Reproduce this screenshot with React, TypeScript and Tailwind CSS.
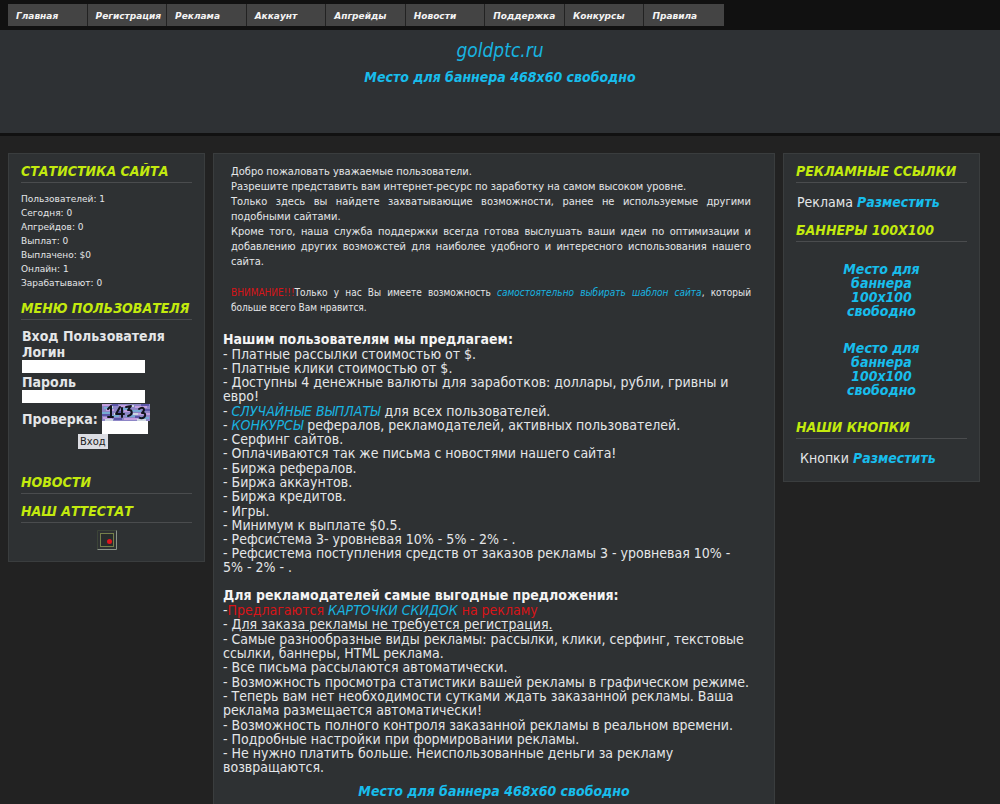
import type { ReactNode } from 'react'

const menu = ['Главная', 'Регистрация', 'Реклама', 'Аккаунт', 'Апгрейды', 'Новости', 'Поддержка', 'Конкурсы', 'Правила']

const stats = [
  ['Пользователей', '1'],
  ['Сегодня', '0'],
  ['Апгрейдов', '0'],
  ['Выплат', '0'],
  ['Выплачено', '$0'],
  ['Онлайн', '1'],
  ['Зарабатывают', '0'],
]

// Lists are kept in small groups, separated by a hairline gap
const userOffers: ReactNode[][] = [
  [
    'Платные рассылки стоимостью от $.',
    'Платные клики стоимостью от $.',
    'Доступны 4 денежные валюты для заработков: доллары, рубли, гривны и евро!',
  ],
  [
    <><Accent>СЛУЧАЙНЫЕ ВЫПЛАТЫ</Accent> для всех пользователей.</>,
    <><Accent>КОНКУРСЫ</Accent> рефералов, рекламодателей, активных пользователей.</>,
    'Серфинг сайтов.',
    'Оплачиваются так же письма с новостями нашего сайта!',
  ],
  ['Биржа рефералов.', 'Биржа аккаунтов.', 'Биржа кредитов.'],
  [
    'Игры.',
    'Минимум к выплате $0.5.',
    'Рефсистема 3- уровневая 10% - 5% - 2% - .',
    'Рефсистема поступления средств от заказов рекламы 3 - уровневая 10% - 5% - 2% - .',
  ],
]

const adOffers: ReactNode[][] = [
  [
    'Самые разнообразные виды рекламы: рассылки, клики, серфинг, текстовые ссылки, баннеры, HTML реклама.',
    'Все письма рассылаются автоматически.',
  ],
  [
    'Возможность просмотра статистики вашей рекламы в графическом режиме.',
    'Теперь вам нет необходимости сутками ждать заказанной рекламы. Ваша реклама размещается автоматически!',
  ],
  [
    'Возможность полного контроля заказанной рекламы в реальном времени.',
    'Подробные настройки при формировании рекламы.',
    'Не нужно платить больше. Неиспользованные деньги за рекламу возвращаются.',
  ],
]

function Accent({ children }: { children: ReactNode }) {
  return <a href="#" className="italic text-[#18b4e0]">{children}</a>
}

function BoldLink({ children }: { children: ReactNode }) {
  return <a href="#" className="font-bold italic text-[#18bdec]">{children}</a>
}

function Title({ children }: { children: ReactNode }) {
  return (
    <h2 className="border-b border-[#4a4c4e] text-[14px] leading-[21px] font-bold italic uppercase whitespace-nowrap text-[#c3ea0e]">
      {children}
    </h2>
  )
}

function OfferList({ items }: { items: ReactNode[] }) {
  return (
    <ul>
      {items.map((item, i) => (
        <li key={i}>- {item}</li>
      ))}
    </ul>
  )
}

function Captcha() {
  return (
    <svg width="48" height="17" viewBox="0 0 48 17" role="img" aria-label="Код проверки">
      <rect width="48" height="17" fill="#8d85c6" />
      <g strokeWidth="1.5" fill="none">
        <path d="M0 1h9M17 2h12M33 3h12M4 6h8M22 7h6M36 10h12M1 14h9M22 15h14" stroke="#d3a7e6" />
        <path d="M2 4h9M19 5h7M30 7h9M0 9h10M24 12h9M9 12h8M39 14h8" stroke="#6fb7d8" />
        <path d="M10 1h6M39 1h8M0 11h8M15 8h6M33 13h5M12 15h8M41 6h7" stroke="#4c479f" />
        <path d="M7 3h4M27 2h5M12 10h5M31 10h5M3 16h8M35 16h9" stroke="#dff0ea" />
      </g>
      <g stroke="#11131c" strokeWidth="2" fill="none" strokeLinecap="round" strokeLinejoin="round">
        <path d="M6 5l3-3v11M6 13h5" />
        <path d="M18 3l-4 7h8M20 4v9" />
        <path d="M24 3l5-1-3 4c5-1 5 5 0 6" />
        <path d="M37 5c4-3 7 0 3 4 5-1 4 6-2 5" />
      </g>
    </svg>
  )
}

function LoginForm() {
  return (
    <form className="mt-2 flex flex-col items-start pl-px text-[14px] leading-4 font-bold" onSubmit={(e) => e.preventDefault()}>
      <h3>Вход Пользователя</h3>
      <label htmlFor="login">Логин</label>
      <input id="login" type="text" className="h-[13px] w-[123px] bg-white px-1 text-[11px] text-black" />
      <label htmlFor="password" className="mt-px">Пароль</label>
      <input id="password" type="password" className="h-[13px] w-[123px] bg-white px-1 text-[11px] text-black" />
      <div className="mt-px flex items-center gap-1">
        <label htmlFor="code">Проверка:</label>
        <div className="flex flex-col">
          <Captcha />
          <input id="code" type="text" className="h-[13px] w-[46px] bg-white px-1 text-[11px] text-black" />
        </div>
      </div>
      <button type="submit" className="ml-14 h-[15px] bg-[#dcdde3] px-0.5 text-[11px] leading-[15px] font-normal text-[#222]">
        Вход
      </button>
    </form>
  )
}

export default function App() {
  return (
    <div className="min-h-screen bg-[#222] font-['DejaVu_Sans_Condensed','DejaVu_Sans',sans-serif] text-[14px] leading-[14px] text-[#e4e6e8]">
      <nav className="bg-[#111] px-2 py-1">
        <ul className="grid h-[22px] max-w-[716px] grid-cols-9">
          {menu.map((name) => (
            <li key={name} className="h-[22px] border-r border-[#222] bg-[#444] last:border-r-0">
              <a href="#" className="block pl-2 font-['DejaVu_Sans',sans-serif] text-[9px] leading-6 font-bold italic text-[#f4f4f4]">{name}</a>
            </li>
          ))}
        </ul>
      </nav>

      <header className="h-[106px] border-b-3 border-[#111] bg-[#2e3134] pt-2 text-center">
        <h1 className="text-[19px] leading-6"><Accent>goldptc.ru</Accent></h1>
        <p className="mt-2"><BoldLink>Место для баннера 468x60 свободно</BoldLink></p>
      </header>

      <div className="flex items-start gap-2 pt-[17px] pr-5 pl-2">
        <aside className="w-[197px] shrink-0 border border-[#3a3d3e] bg-[#2e3133] px-3 pt-[7px] pb-[11px]">
          <Title>Статистика сайта</Title>
          <ul className="mt-[9px] mb-2 font-['DejaVu_Sans',sans-serif] text-[9px]">
            {stats.map(([name, value]) => (
              <li key={name}>{name}: {value}</li>
            ))}
          </ul>
          <Title>Меню пользователя</Title>
          <LoginForm />
          <div className="mt-[23px] flex flex-col gap-[7px]">
            <Title>Новости</Title>
            <Title>Наш аттестат</Title>
            <a href="#" className="self-center" aria-label="Аттестат">
              <svg width="20" height="20" viewBox="0 0 20 20">
                <path d="M.5 19.5V.5h19" stroke="#3c4438" fill="none" />
                <path d="M.5 19.5h19V.5" stroke="#8c958a" fill="none" />
                <rect x="3.5" y="3.5" width="13" height="13" stroke="#76804a" fill="#282c2c" />
                <circle cx="12.5" cy="11.5" r="2.5" fill="#e0141c" />
              </svg>
            </a>
          </div>
        </aside>

        <main className="min-w-0 flex-1 border border-[#3a3d3e] bg-[#2e3133] px-[9px] pt-2.5 pb-4">
          <div className="pr-3.5 pl-2 text-justify text-[11px] leading-[15px]">
            <p>Добро пожаловать уважаемые пользователи.</p>
            <p>Разрешите представить вам интернет-ресурс по заработку на самом высоком уровне.</p>
            <p>Только здесь вы найдете захватывающие возможности, ранее не используемые другими подобными сайтами.</p>
            <p>Кроме того, наша служба поддержки всегда готова выслушать ваши идеи по оптимизации и добавлению других возможстей для наиболее удобного и интересного использования нашего сайта.</p>
            <p className="mt-4 text-[10px]">
              <span className="text-[#d81418]">ВНИМАНИЕ!!!</span>Только у нас Вы имеете возможность <Accent>самостоятельно выбирать шаблон сайта</Accent>, который больше всего Вам нравится.
            </p>
          </div>

          <section className="mt-[17px] flex flex-col gap-px pr-3.5">
            <h2 className="font-bold text-[#f4f4f4]">Нашим пользователям мы предлагаем:</h2>
            {userOffers.map((items, i) => <OfferList key={i} items={items} />)}
          </section>

          <section className="mt-[14px] flex flex-col gap-px pr-3.5">
            <h2 className="font-bold text-[#f4f4f4]">Для рекламодателей самые выгодные предложения:</h2>
            <div>
              <p>-<span className="text-[#d81418]">Предлагаются <Accent>КАРТОЧКИ СКИДОК</Accent> на рекламу</span></p>
              <p>- <u>Для заказа рекламы не требуется регистрация.</u></p>
            </div>
            {adOffers.map((items, i) => <OfferList key={i} items={items} />)}
          </section>

          <p className="mt-2.5 text-center"><BoldLink>Место для баннера 468x60 свободно</BoldLink></p>
        </main>

        <aside className="w-[197px] shrink-0 border border-[#3a3d3e] bg-[#2e3133] px-3 pt-[7px] pb-4">
          <Title>Рекламные ссылки</Title>
          <p className="mt-3 mb-[11px] pl-px">Реклама <BoldLink>Разместить</BoldLink></p>
          <Title>Баннеры 100x100</Title>
          <div className="mx-auto my-5 flex w-[100px] flex-col gap-[23px] text-center">
            <p><BoldLink>Место для баннера 100x100 свободно</BoldLink></p>
            <p><BoldLink>Место для баннера 100x100 свободно</BoldLink></p>
          </div>
          <Title>Наши кнопки</Title>
          <p className="mt-3 pl-1">Кнопки <BoldLink>Разместить</BoldLink></p>
        </aside>
      </div>
    </div>
  )
}
